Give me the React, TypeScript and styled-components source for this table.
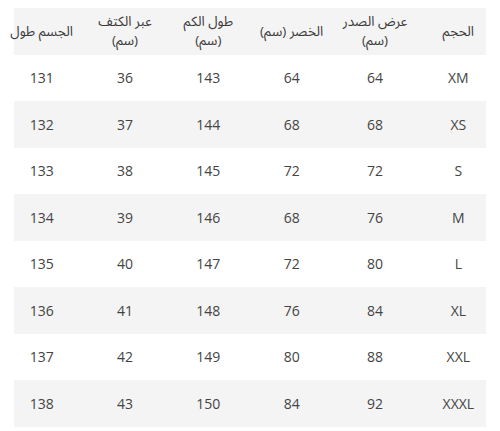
import React from 'react';
import styled, { createGlobalStyle } from 'styled-components';

const GlobalStyle = createGlobalStyle`
  html, body {
    margin: 0;
    padding: 0;
    background: #ffffff;
  }
`;

const Page = styled.div`
  width: 500px;
  height: 431px;
  padding-top: 8px;
  box-sizing: border-box;
  font-family: 'Open Sans', 'Noto Sans Arabic', 'DejaVu Sans', sans-serif;
  color: #444444;
  overflow: hidden;
`;

const Table = styled.div`
  direction: rtl;
  display: flex;
  flex-direction: column;
`;

const Row = styled.div<{ $shaded: boolean }>`
  display: grid;
  grid-template-columns: repeat(6, 1fr);
  align-items: center;
  height: 46.5px;
  background: ${(p) =>
    p.$shaded
      ? 'linear-gradient(#f4f4f4, #f4f4f4) 14px 0 / calc(100% - 28px) 100% no-repeat'
      : 'transparent'};
`;

const Cell = styled.div`
  text-align: center;
  font-size: 14px;
  line-height: 19px;
  white-space: nowrap;
`;

const HeadCell = styled(Cell)`
  font-size: 13.5px;
  line-height: 19px;
  color: #3a3a3a;
`;

const headers = [
  ['الحجم'],
  ['عرض الصدر', '(سم)'],
  ['الخصر (سم)'],
  ['طول الكم', '(سم)'],
  ['عبر الكتف', '(سم)'],
  ['الجسم طول'],
];

const rows = [
  ['XM', '64', '64', '143', '36', '131'],
  ['XS', '68', '68', '144', '37', '132'],
  ['S', '72', '72', '145', '38', '133'],
  ['M', '76', '68', '146', '39', '134'],
  ['L', '80', '72', '147', '40', '135'],
  ['XL', '84', '76', '148', '41', '136'],
  ['XXL', '88', '80', '149', '42', '137'],
  ['XXXL', '92', '84', '150', '43', '138'],
];

const App: React.FC = () => {
  return (
    <Page>
      <GlobalStyle />
      <Table>
        <Row $shaded>
          {headers.map((lines, i) => (
            <HeadCell key={i}>
              {lines.map((l, j) => (
                <div key={j}>{l}</div>
              ))}
            </HeadCell>
          ))}
        </Row>
        {rows.map((r, i) => (
          <Row key={r[0]} $shaded={i % 2 === 1}>
            {r.map((v, j) => (
              <Cell key={j}>{v}</Cell>
            ))}
          </Row>
        ))}
      </Table>
    </Page>
  );
};

export default App;
